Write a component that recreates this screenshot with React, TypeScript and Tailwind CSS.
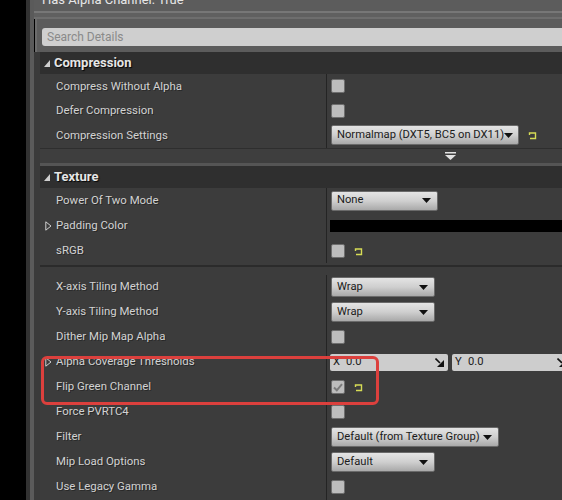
import React from "react";

const HeaderTri = () => (
  <svg width="6" height="7" viewBox="0 0 6 7" className="shrink-0">
    <polygon points="6,0 6,7 0,7" fill="#cfcfcf" />
  </svg>
);

const CollapsedArrow = () => (
  <svg width="7" height="10" viewBox="0 0 7 10" className="shrink-0">
    <path d="M0.8 0.8 L6 5 L0.8 9.2 Z" fill="none" stroke="#cfcfcf" strokeWidth="1" />
  </svg>
);

const DropTri = () => (
  <svg width="9" height="5" viewBox="0 0 9 5" className="shrink-0">
    <polygon points="0,0 9,0 4.5,5" fill="#111" />
  </svg>
);

const Reset = () => (
  <svg width="9" height="9" viewBox="0 0 9 9" className="shrink-0 mt-[1px]">
    <path d="M1.5 4 V2 H7.5 V7.5 H2" fill="none" stroke="#d6dc55" strokeWidth="1.4" />
  </svg>
);

const VecIcon = () => (
  <svg width="9" height="9" viewBox="0 0 9 9" className="shrink-0">
    <polygon points="9,2 9,9 2,9" fill="#111" />
    <line x1="0.5" y1="0.5" x2="5" y2="5" stroke="#111" strokeWidth="1.6" />
  </svg>
);

const Checkbox = ({ checked = false }: { checked?: boolean }) => (
  <div className="w-[14px] h-[14px] shrink-0 rounded-[2px] bg-[#bdbdbd] border border-[#6e6e6e] flex items-center justify-center">
    {checked && (
      <svg width="10" height="9" viewBox="0 0 10 9">
        <path d="M1 4.5 L3.8 7.3 L9 1.2" stroke="#7b7b7b" strokeWidth="2" fill="none" />
      </svg>
    )}
  </div>
);

const Dropdown = ({ label, w }: { label: string; w: string }) => (
  <div
    className={`${w} h-[20px] shrink-0 rounded-[2px] border border-[#6a6a6a] bg-gradient-to-b from-[#e4e4e4] via-[#cfcfcf] to-[#a9a9a9] flex items-center justify-between pl-[5px] pr-[6px] text-[11.2px] text-[#1b1b1b] whitespace-nowrap`}
  >
    <span>{label}</span>
    <DropTri />
  </div>
);

const Row = ({
  name,
  children,
  arrow = false,
  h = "h-[25px]",
}: {
  name: string;
  children?: React.ReactNode;
  arrow?: boolean;
  h?: string;
}) => (
  <div className={`flex ${h} shrink-0 bg-[#3c3c3c]`}>
    <div className="w-[286px] shrink-0 flex items-center pl-[5px] text-[11.4px] text-[#d2d2d2] whitespace-nowrap [text-shadow:1px_1px_0_rgba(0,0,0,0.35)]">
      <div className="w-[11px] shrink-0 flex items-center">{arrow && <CollapsedArrow />}</div>
      <span>{name}</span>
    </div>
    <div className="w-[1px] shrink-0 bg-[#242424]" />
    <div className="flex-1 min-w-0 flex items-center pl-[4px] gap-[9px] overflow-hidden">{children}</div>
  </div>
);

const Header = ({ title }: { title: string }) => (
  <div className="h-[22px] shrink-0 bg-[#2f2f2f] flex items-center pl-[4px] gap-[4px]">
    <HeaderTri />
    <span className="text-[13px] font-bold text-[#e6e6e6] [text-shadow:1px_1px_1px_rgba(0,0,0,0.9)]">{title}</span>
  </div>
);

const VecField = ({ axis, value }: { axis: string; value: string }) => (
  <div className="w-[118px] h-[17px] shrink-0 rounded-[2px] bg-[#cdcdcd] flex items-center pl-[3px] pr-[4px] text-[11.2px] text-[#1b1b1b]">
    <span className="w-[13px]">{axis}</span>
    <span className="flex-1">{value}</span>
    <VecIcon />
  </div>
);

export default function App() {
  return (
    <div className="relative w-[562px] h-[500px] overflow-hidden flex bg-black font-['Roboto','Liberation_Sans',sans-serif]">
      <div className="w-[26px] shrink-0 bg-black" />
      <div className="w-[4px] shrink-0 bg-[#323232]" />
      <div className="w-[4px] shrink-0 bg-[#5a5a5a]" />
      <div className="flex-1 min-w-0 flex flex-col">
        {/* top info */}
        <div className="h-[11px] shrink-0 bg-[#5c5c5c] overflow-hidden pl-[8px]">
          <div className="mt-[-7px] text-[13px] leading-[13px] text-[#e6e6e6] whitespace-nowrap">Has Alpha Channel: True</div>
        </div>
        <div className="h-[2px] shrink-0 bg-[#777777]" />
        <div className="h-[4px] shrink-0 bg-[#606060]" />
        <div className="h-[2px] shrink-0 bg-[#6e6e6e]" />

        {/* search */}
        <div className="shrink-0 bg-[#5c5c5c] ml-[1px] border-l-2 border-[#6c6c6c] pl-[5px] pt-[9px] pb-[6px]">
          <div className="h-[18px] bg-[#cfcfcf] rounded-l-[3px] flex items-center pl-[5px] text-[12px] text-[#8a8a8a]">
            Search Details
          </div>
        </div>

        {/* details */}
        <div className="flex-1 flex flex-col bg-[#3a3a3a] pl-[6px]">
          <Header title="Compression" />
          <Row name="Compress Without Alpha" h="h-[24.5px]">
            <Checkbox />
          </Row>
          <Row name="Defer Compression" h="h-[24.5px]">
            <Checkbox />
          </Row>
          <Row name="Compression Settings" h="h-[24.5px]">
            <Dropdown label="Normalmap (DXT5, BC5 on DX11)" w="w-[188px]" />
            <Reset />
          </Row>
          <div className="h-[1.5px] shrink-0 bg-[#2e2e2e]" />
          <div className="h-[14px] shrink-0 bg-[#3e3e3e] flex items-center pl-[405px]">
            <svg width="11" height="8" viewBox="0 0 11 8">
              <rect x="0" y="0" width="11" height="1.5" fill="#e2e2e2" />
              <polygon points="0,3 11,3 5.5,8" fill="#e2e2e2" />
            </svg>
          </div>
          <div className="h-[3px] shrink-0 bg-[#555555]" />
          <Header title="Texture" />
          <Row name="Power Of Two Mode">
            <Dropdown label="None" w="w-[107px]" />
          </Row>
          <Row name="Padding Color" arrow>
            <div className="flex-1 h-[12px] bg-black -ml-[1px]" />
          </Row>
          <Row name="sRGB">
            <Checkbox />
            <Reset />
          </Row>
          <div className="h-[2px] shrink-0 bg-[#3c3c3c]" />
          <div className="h-[2px] shrink-0 bg-[#2b2b2b]" />
          <div className="h-[7.5px] shrink-0 bg-[#3c3c3c]" />
          <Row name="X-axis Tiling Method">
            <Dropdown label="Wrap" w="w-[104px]" />
          </Row>
          <Row name="Y-axis Tiling Method">
            <Dropdown label="Wrap" w="w-[104px]" />
          </Row>
          <Row name="Dither Mip Map Alpha">
            <Checkbox />
          </Row>
          <Row name="Alpha Coverage Thresholds" arrow>
            <div className="flex gap-[4px] -ml-[1px]">
              <VecField axis="X" value="0.0" />
              <VecField axis="Y" value="0.0" />
            </div>
          </Row>
          <Row name="Flip Green Channel">
            <Checkbox checked />
            <Reset />
          </Row>
          <Row name="Force PVRTC4">
            <Checkbox />
          </Row>
          <Row name="Filter">
            <Dropdown label="Default (from Texture Group)" w="w-[168px]" />
          </Row>
          <Row name="Mip Load Options">
            <Dropdown label="Default" w="w-[104px]" />
          </Row>
          <Row name="Use Legacy Gamma">
            <Checkbox />
          </Row>
          <div className="flex-1 bg-[#3c3c3c]" />
        </div>
      </div>

      {/* highlight overlay */}
      <div className="absolute left-[41px] top-[356px] w-[338px] h-[49px] border-[3.5px] border-[#dc403d] rounded-[6px] pointer-events-none" />
    </div>
  );
}
